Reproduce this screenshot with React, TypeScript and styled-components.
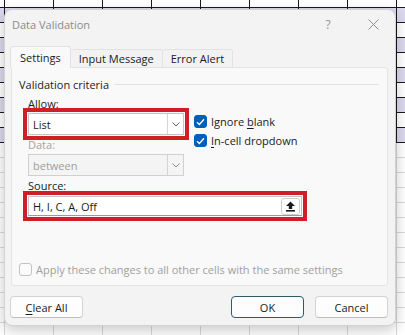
import React from "react";
import styled, { createGlobalStyle } from "styled-components";

const GlobalStyle = createGlobalStyle`
  html, body {
    margin: 0;
    padding: 0;
    background: #ffffff;
  }
  body {
    font-family: "Open Sans", "Noto Sans", "Liberation Sans", sans-serif;
    font-size: 11px;
    color: #1b1b1b;
  }
  * {
    box-sizing: border-box;
  }
`;

const Screen = styled("div")`
  position: relative;
  width: 405px;
  height: 335px;
  overflow: hidden;
  background: #ffffff;
`;

// spreadsheet behind the dialog
const Sheet = styled("div")`
  display: grid;
  grid-template-columns: repeat(10, 49px);
  grid-auto-rows: 15px;
  margin: -7px 0 0 -44px;
`;

const Cell = styled("div")<{ $banded: boolean; $fill: boolean }>`
  border-right: 1px solid ${(p) => (p.$banded ? "#1a1a1a" : "#d9d9d9")};
  border-bottom: 1px solid ${(p) => (p.$banded ? "#1a1a1a" : "#d9d9d9")};
  background: ${(p) => (p.$fill ? "#dcd8ee" : "#ffffff")};
`;

const Dialog = styled("section")`
  position: absolute;
  left: 4px;
  top: 9px;
  width: 392px;
  height: 317px;
  display: flex;
  flex-direction: column;
  background: #f3f3f3;
  border: 1px solid #d2d2d2;
  border-radius: 8px;
  box-shadow: 0 4px 14px rgba(0, 0, 0, 0.22);
`;

const TitleBar = styled("header")`
  display: flex;
  align-items: center;
  height: 29px;
  padding-left: 7px;
`;

const Title = styled("h1")`
  flex: 1;
  margin: 0;
  font-size: 11px;
  font-weight: 400;
  color: #8b8b8b;
`;

const CaptionButton = styled("button")<{ $width: number }>`
  width: ${(p) => p.$width}px;
  height: 29px;
  display: flex;
  align-items: center;
  justify-content: center;
  padding: 0;
  border: none;
  background: transparent;
  color: #969696;
  font-family: inherit;
  font-size: 12px;
`;

const TabStrip = styled("nav")`
  position: relative;
  z-index: 1;
  display: flex;
  align-items: flex-end;
  margin: 7px 0 -1px 5px;
`;

const Tab = styled("div")<{ $active?: boolean }>`
  height: ${(p) => (p.$active ? 22 : 19)}px;
  padding: 0 ${(p) => (p.$active ? 9 : 8)}px;
  display: flex;
  align-items: center;
  padding-bottom: ${(p) => (p.$active ? 1 : 0)}px;
  background: ${(p) => (p.$active ? "#f9f9f9" : "#f2f2f2")};
  border: 1px solid #e2e2e2;
  border-bottom: ${(p) => (p.$active ? "none" : "1px solid #e2e2e2")};
  border-left: ${(p) => (p.$active ? "1px solid #e2e2e2" : "none")};
  border-radius: 3px 3px 0 0;
  color: #1b1b1b;
  &:first-child + & {
    border-left: none;
  }
`;

const Panel = styled("div")`
  height: 219px;
  margin: 0 7px 0 6px;
  padding: 8px 8px 7px 7px;
  display: flex;
  flex-direction: column;
  background: #f9f9f9;
  border: 1px solid #e4e4e4;
  border-radius: 0 3px 3px 3px;
`;

const GroupHeader = styled("div")`
  display: flex;
  align-items: center;
  gap: 5px;
  height: 16px;
  &::after {
    content: "";
    flex: 1;
    height: 1px;
    background: #e1e1e1;
  }
`;

const GroupBody = styled("div")`
  padding-left: 9px;
`;

const TopRow = styled("div")`
  display: flex;
  gap: 10px;
`;

const FieldColumn = styled("div")`
  width: 156px;
`;

const FieldLabel = styled("div")<{ $disabled?: boolean; $top: number; $bottom: number }>`
  line-height: 16px;
  margin: ${(p) => p.$top}px 0 ${(p) => p.$bottom}px;
  color: ${(p) => (p.$disabled ? "#a3a3a3" : "#1b1b1b")};
`;

const Combo = styled("div")<{ $disabled?: boolean; $marked?: boolean }>`
  width: 156px;
  height: 22px;
  display: flex;
  align-items: center;
  padding-left: 4px;
  background: ${(p) => (p.$disabled ? "#f4f4f4" : "#ffffff")};
  border: 1px solid ${(p) => (p.$disabled ? "#d0d0d0" : "#c4c4c4")};
  color: ${(p) => (p.$disabled ? "#9e9e9e" : "#1b1b1b")};
  outline: ${(p) => (p.$marked ? "4px solid #cf1f24" : "none")};
  outline-offset: 1px;
`;

const ComboText = styled("span")`
  flex: 1;
`;

const DropButton = styled("span")`
  width: 16px;
  height: 20px;
  display: flex;
  align-items: center;
  justify-content: center;
  border-left: 1px solid #d4d4d4;
`;

const CheckColumn = styled("div")`
  padding-top: 20px;
`;

const CheckRow = styled("label")<{ $disabled?: boolean }>`
  display: flex;
  align-items: center;
  gap: 4px;
  height: 19px;
  color: ${(p) => (p.$disabled ? "#a0a0a0" : "#1b1b1b")};
`;

const Box = styled("span")<{ $checked?: boolean }>`
  width: 13px;
  height: 13px;
  display: flex;
  align-items: center;
  justify-content: center;
  border-radius: 3px;
  background: ${(p) => (p.$checked ? "#005fb8" : "#fbfbfb")};
  border: 1px solid ${(p) => (p.$checked ? "#005fb8" : "#c2c2c2")};
`;

const Key = styled("span")`
  text-decoration: underline;
  text-underline-offset: 2px;
`;

const SourceInput = styled("div")`
  width: 274px;
  height: 20px;
  display: flex;
  align-items: center;
  padding: 0 1px 0 4px;
  background: #ffffff;
  border: 1px solid #c4c4c4;
  border-bottom-color: #9a9a9a;
  outline: 4px solid #cf1f24;
  outline-offset: 1px;
`;

const RefButton = styled("span")`
  width: 19px;
  height: 17px;
  display: flex;
  align-items: center;
  justify-content: center;
  background: #ffffff;
  border: 1px solid #cfcfcf;
  border-radius: 3px;
`;

const ApplyRow = styled(CheckRow)`
  margin-top: auto;
  height: 18px;
`;

const Footer = styled("footer")`
  display: flex;
  gap: 11px;
  margin-top: 10px;
  padding: 0 7px 0 5px;
`;

const Button = styled("button")<{ $primary?: boolean; $pushRight?: boolean }>`
  width: 73px;
  height: 22px;
  padding: 0;
  margin-left: ${(p) => (p.$pushRight ? "auto" : "0")};
  background: #fdfdfd;
  border: 1px solid ${(p) => (p.$primary ? "#2c5c6e" : "#d3d3d3")};
  border-bottom-color: ${(p) => (p.$primary ? "#2c5c6e" : "#bdbdbd")};
  border-radius: 4px;
  font-family: inherit;
  font-size: 11px;
  color: #1b1b1b;
`;

const Chevron = ({ color }: { color: string }) => (
  <svg width="8" height="5" viewBox="0 0 8 5">
    <path d="M0.5 0.5 L4 4 L7.5 0.5" fill="none" stroke={color} strokeWidth="1" />
  </svg>
);

const Tick = () => (
  <svg width="9" height="8" viewBox="0 0 9 8">
    <path d="M1 4.2 L3.4 6.5 L8 1.3" fill="none" stroke="#ffffff" strokeWidth="1.3" />
  </svg>
);

const Collapse = () => (
  <svg width="11" height="11" viewBox="0 0 11 11">
    <path d="M5.5 0.5 L10 5 H7.2 V8 H3.8 V5 H1 Z" fill="#1b1b1b" />
    <rect x="1" y="9" width="9" height="1.6" fill="#1b1b1b" />
  </svg>
);

const CloseGlyph = () => (
  <svg width="11" height="11" viewBox="0 0 11 11">
    <path d="M0.5 0.5 L10.5 10.5 M10.5 0.5 L0.5 10.5" stroke="#8f8f8f" strokeWidth="1" />
  </svg>
);

const ROWS = 24;
const COLS = 10;

export default function App() {
  const cells = [];
  for (let r = 0; r < ROWS; r++) {
    for (let c = 0; c < COLS; c++) {
      const banded = r <= 9;
      cells.push(<Cell key={`${r}-${c}`} $banded={banded} $fill={banded && r % 2 === 1} />);
    }
  }

  return (
    <Screen>
      <GlobalStyle />
      <Sheet>{cells}</Sheet>

      <Dialog>
        <TitleBar>
          <Title>Data Validation</Title>
          <CaptionButton $width={46}>?</CaptionButton>
          <CaptionButton $width={44}>
            <CloseGlyph />
          </CaptionButton>
        </TitleBar>

        <TabStrip>
          <Tab $active>Settings</Tab>
          <Tab>Input Message</Tab>
          <Tab>Error Alert</Tab>
        </TabStrip>

        <Panel>
          <GroupHeader>Validation criteria</GroupHeader>
          <GroupBody>
            <TopRow>
              <FieldColumn>
                <FieldLabel $top={4} $bottom={1}>Allow:</FieldLabel>
                <Combo $marked>
                  <ComboText>List</ComboText>
                  <DropButton>
                    <Chevron color="#5f5f5f" />
                  </DropButton>
                </Combo>
                <FieldLabel $disabled $top={2} $bottom={1}>Data:</FieldLabel>
                <Combo $disabled>
                  <ComboText>between</ComboText>
                  <DropButton>
                    <Chevron color="#8a8a8a" />
                  </DropButton>
                </Combo>
              </FieldColumn>
              <CheckColumn>
                <CheckRow>
                  <Box $checked>
                    <Tick />
                  </Box>
                  <span>
                    Ignore <Key>b</Key>lank
                  </span>
                </CheckRow>
                <CheckRow>
                  <Box $checked>
                    <Tick />
                  </Box>
                  <span>
                    <Key>I</Key>n-cell dropdown
                  </span>
                </CheckRow>
              </CheckColumn>
            </TopRow>
            <FieldLabel $top={2} $bottom={2}>Source:</FieldLabel>
            <SourceInput>
              <ComboText>H, I, C, A, Off</ComboText>
              <RefButton>
                <Collapse />
              </RefButton>
            </SourceInput>
          </GroupBody>
          <ApplyRow $disabled>
            <Box />
            <span>Apply these changes to all other cells with the same settings</span>
          </ApplyRow>
        </Panel>

        <Footer>
          <Button>
            <Key>C</Key>lear All
          </Button>
          <Button $primary $pushRight>
            OK
          </Button>
          <Button>Cancel</Button>
        </Footer>
      </Dialog>
    </Screen>
  );
}
